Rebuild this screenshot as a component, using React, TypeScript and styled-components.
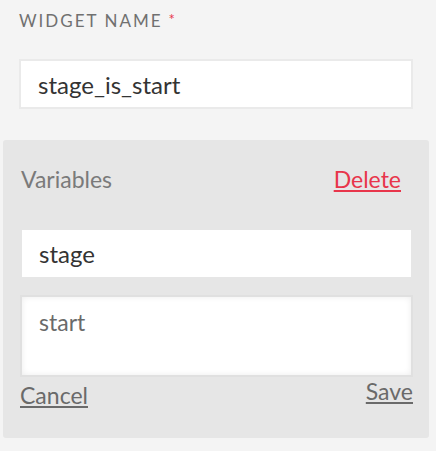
import React from "react";
import styled, { createGlobalStyle } from "styled-components";

const Global = createGlobalStyle`
  html, body { margin: 0; padding: 0; background: #f4f4f4; }
  body { font-family: Lato, "Open Sans", sans-serif; }
  * { box-sizing: border-box; }
`;

const Page = styled.div`
  width: 436px;
  height: 451px;
  padding: 10px 7px 0 3px;
  background: #f4f4f4;
`;

const Field = styled.div`
  padding: 0 16px;
`;

const Label = styled.div`
  font-family: Lato, sans-serif;
  font-size: 17px;
  line-height: 19px;
  letter-spacing: 2px;
  color: #707070;
  text-transform: uppercase;
`;

const Star = styled.span`
  color: #e8354b;
  margin-left: 6px;
  font-size: 15px;
  vertical-align: 2px;
`;

const NameInput = styled.input`
  display: block;
  width: 100%;
  height: 50px;
  margin-top: 29px;
  padding: 0 17px;
  border: 2px solid #eaeaea;
  background: #fff;
  font-family: Lato, sans-serif;
  font-size: 24px;
  color: #333;
  outline: none;
`;

const Panel = styled.div`
  margin-top: 31px;
  background: #e6e6e6;
  border-radius: 3px;
  padding: 27px 16px 31px 17px;
`;

const Header = styled.div`
  display: flex;
  justify-content: space-between;
  align-items: baseline;
  padding: 0 12px 0 1px;
`;

const Title = styled.div`
  font-family: Lato, sans-serif;
  font-size: 23px;
  line-height: 24px;
  color: #7a7a7a;
`;

const LinkText = styled.a<{ $tone: "danger" | "muted" }>`
  font-family: Lato, sans-serif;
  font-size: 23px;
  line-height: 24px;
  color: ${(p) => (p.$tone === "danger" ? "#e8354b" : "#6a6a6a")};
  text-decoration: underline;
  text-underline-offset: 2px;
  text-decoration-thickness: 2px;
  cursor: pointer;
`;

const VarInput = styled.input`
  display: block;
  width: calc(100% - 4px);
  margin: 39px 2px 0;
  height: 47px;
  padding: 0 17px;
  border: none;
  background: #fff;
  font-family: Lato, sans-serif;
  font-size: 24px;
  color: #333;
  outline: none;
`;

const ValueArea = styled.textarea`
  display: block;
  width: 100%;
  height: 82px;
  margin-top: 18px;
  padding: 12px 17px;
  border: 2px solid #e0e0e0;
  box-shadow: inset 0 0 6px rgba(0, 0, 0, 0.08);
  background: #fff;
  font-family: Lato, sans-serif;
  font-size: 23px;
  line-height: 26px;
  color: #6a6a6a;
  resize: none;
  outline: none;
`;

const Actions = styled.div`
  display: flex;
  justify-content: space-between;
  align-items: flex-start;
  margin-top: 2px;
`;

const CancelLink = styled(LinkText)`
  margin-top: 4px;
`;

export default function App() {
  return (
    <Page>
      <Global />
      <Field>
        <Label>
          Widget Name<Star>*</Star>
        </Label>
        <NameInput readOnly defaultValue="stage_is_start" />
      </Field>
      <Panel>
        <Header>
          <Title>Variables</Title>
          <LinkText $tone="danger">Delete</LinkText>
        </Header>
        <VarInput readOnly defaultValue="stage" />
        <ValueArea readOnly defaultValue="start" />
        <Actions>
          <CancelLink $tone="muted">Cancel</CancelLink>
          <LinkText $tone="muted">Save</LinkText>
        </Actions>
      </Panel>
    </Page>
  );
}
